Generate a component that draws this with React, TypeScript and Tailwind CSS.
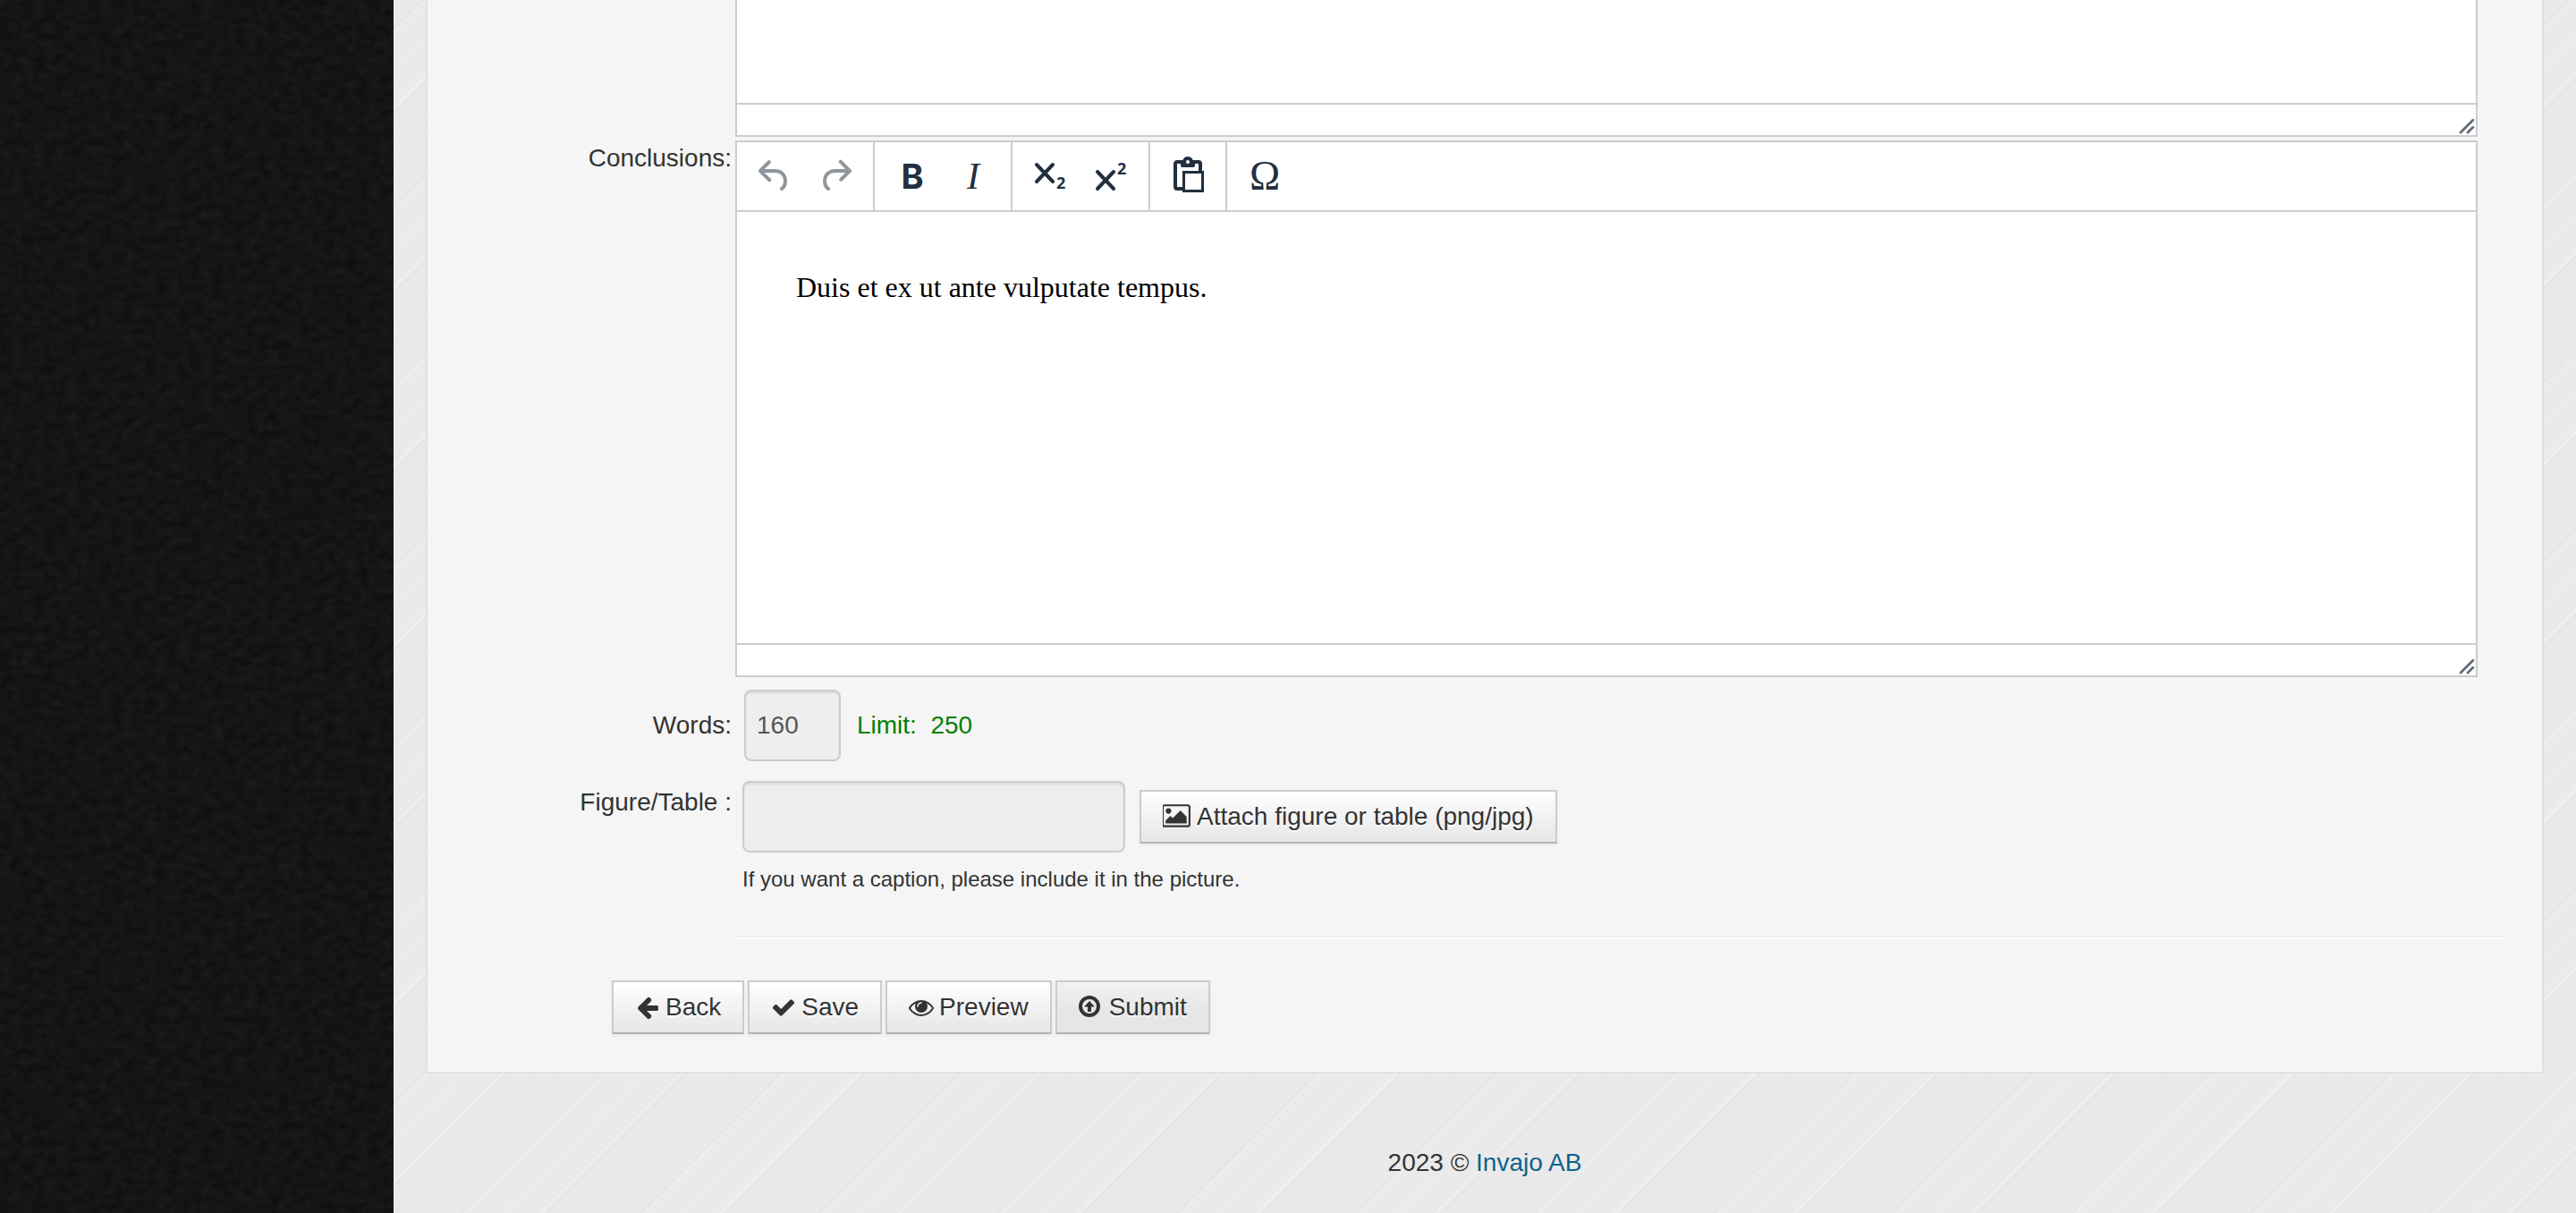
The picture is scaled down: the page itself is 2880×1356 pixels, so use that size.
import { useState, type ReactNode } from 'react';

const icons = {
  undo: 'M6.4 8H12c3.7 0 6.2 2 6.8 5.1.6 2.7-.4 5.6-2.3 6.8a1 1 0 01-1-1.8c1.1-.6 1.8-2.7 1.4-4.6-.5-2.1-2.1-3.5-4.9-3.5H6.4l3.3 3.3a1 1 0 11-1.4 1.4l-5-5a1 1 0 010-1.4l5-5a1 1 0 011.4 1.4L6.4 8z',
  redo: 'M17.6 10H12c-2.8 0-4.4 1.4-4.9 3.5-.4 2 .3 4 1.4 4.6a1 1 0 11-1 1.8c-2-1.2-2.9-4.1-2.3-6.8.6-3 3-5.1 6.8-5.1h5.6l-3.3-3.3a1 1 0 111.4-1.4l5 5a1 1 0 010 1.4l-5 5a1 1 0 01-1.4-1.4l3.3-3.3z',
  paste:
    'M18 9V5h-2v1c0 .6-.4 1-1 1H9a1 1 0 01-1-1V5H6v13h3V9h9zM9 20H6a2 2 0 01-2-2V5c0-1.1.9-2 2-2h3.2A3 3 0 0112 1a3 3 0 012.8 2H18a2 2 0 012 2v4h1v12H9v-1zm1.5-9.5v9h9v-9h-9zM12 3a1 1 0 00-1 1c0 .5.4 1 1 1s1-.5 1-1-.4-1-1-1z',
  arrowLeft:
    'M1664 896v128q0 53-32.5 90.5t-84.5 37.5h-704l293 294q38 36 38 90t-38 90l-75 76q-37 37-90 37-52 0-91-37l-651-652q-37-37-37-90 0-52 37-91l651-650q38-38 91-38 52 0 90 38l75 74q38 38 38 91t-38 91l-293 293h704q52 0 84.5 37.5t32.5 90.5z',
  check:
    'M1671 566q0 40-28 68l-724 724-136 136q-28 28-68 28t-68-28l-136-136-362-362q-28-28-28-68t28-68l136-136q28-28 68-28t68 28l294 295 656-657q28-28 68-28t68 28l136 136q28 28 28 68z',
  eye: 'M1664 960q-152-236-381-353 61 104 61 225 0 185-131.5 316.5t-316.5 131.5-316.5-131.5-131.5-316.5q0-121 61-225-229 117-381 353 133 205 333.5 326.5t434.5 121.5 434.5-121.5 333.5-326.5zm-720-384q0-20-14-34t-34-14q-125 0-214.5 89.5t-89.5 214.5q0 20 14 34t34 14 34-14 14-34q0-86 61-147t147-61q20 0 34-14t14-34zm848 384q0 34-20 69-140 230-376.5 368.5t-499.5 138.5-499.5-139-376.5-368q-20-35-20-69t20-69q140-229 376.5-368t499.5-139 499.5 139 376.5 368q20 35 20 69z',
  picture:
    'M576 576q0 80-56 136t-136 56-136-56-56-136 56-136 136-56 136 56 56 136zm1024 384v448h-1408v-192l320-320 160 160 512-512zm96-704h-1600q-13 0-22.5 9.5t-9.5 22.5v1216q0 13 9.5 22.5t22.5 9.5h1600q13 0 22.5-9.5t9.5-22.5v-1216q0-13-9.5-22.5t-22.5-9.5zm160 32v1216q0 66-47 113t-113 47h-1600q-66 0-113-47t-47-113v-1216q0-66 47-113t113-47h1600q66 0 113 47t47 113z',
};

function ToolIcon({ d }: { d: string }) {
  return (
    <svg viewBox="0 0 24 24" className="size-12 fill-current">
      <path d={d} />
    </svg>
  );
}

function ButtonIcon({ d }: { d: string }) {
  return (
    <svg viewBox="0 0 1792 1792" className="size-7 fill-current">
      <path d={d} />
    </svg>
  );
}

function ToolGroup({ children, last = false }: { children: ReactNode; last?: boolean }) {
  return <div className={`flex px-2 ${last ? '' : 'border-r-2 border-[#ccc]'}`}>{children}</div>;
}

function Tool({ label, disabled, children }: { label: string; disabled?: boolean; children: ReactNode }) {
  return (
    <button
      type="button"
      aria-label={label}
      disabled={disabled}
      className="flex h-[76px] w-[68px] items-center justify-center text-[#222f3e] disabled:opacity-50"
    >
      {children}
    </button>
  );
}

function StatusBar() {
  return (
    <div className="flex h-9 items-end justify-end border-t-2 border-[#ccc]">
      <svg viewBox="0 0 10 10" className="size-5 fill-[#222f3e]/70">
        <path d="M8.1 1.1A.5.5 0 119 2l-7 7A.5.5 0 111 8l7-7zM8.1 5.1A.5.5 0 119 6l-3 3A.5.5 0 115 8l3-3z" />
      </svg>
    </div>
  );
}

function Toolbar() {
  return (
    <div className="flex border-b-2 border-[#ccc]">
      <ToolGroup>
        <Tool label="Undo" disabled>
          <ToolIcon d={icons.undo} />
        </Tool>
        <Tool label="Redo" disabled>
          <ToolIcon d={icons.redo} />
        </Tool>
      </ToolGroup>
      <ToolGroup>
        <Tool label="Bold">
          <span className="font-[Inter,sans-serif] text-[38px] leading-10 font-bold">B</span>
        </Tool>
        <Tool label="Italic">
          <span className="font-['Liberation_Serif',serif] text-[42px] leading-10 italic">I</span>
        </Tool>
      </ToolGroup>
      <ToolGroup>
        <Tool label="Subscript">
          <svg viewBox="0 0 48 48" className="size-12 fill-current">
            <path d="M9 11l18 19M27 11L9 30" stroke="currentColor" strokeWidth="4" strokeLinecap="round" />
            <text x="31" y="38" fontSize="18" fontWeight="700" fontFamily="Open Sans, sans-serif">2</text>
          </svg>
        </Tool>
        <Tool label="Superscript">
          <svg viewBox="0 0 48 48" className="size-12 fill-current">
            <path d="M9 19l18 19M27 19L9 38" stroke="currentColor" strokeWidth="4" strokeLinecap="round" />
            <text x="31" y="22" fontSize="18" fontWeight="700" fontFamily="Open Sans, sans-serif">2</text>
          </svg>
        </Tool>
      </ToolGroup>
      <ToolGroup>
        <Tool label="Paste as text">
          <ToolIcon d={icons.paste} />
        </Tool>
      </ToolGroup>
      <ToolGroup last>
        <Tool label="Special character">
          <span className="font-['Liberation_Serif',serif] text-[46px] leading-10">Ω</span>
        </Tool>
      </ToolGroup>
    </div>
  );
}

function FormButton({ icon, active, children }: { icon: ReactNode; active?: boolean; children: ReactNode }) {
  return (
    <button
      type="button"
      className={`flex h-[60px] items-center gap-[6px] border-2 border-[#ccc] border-b-[#b3b3b3] bg-linear-to-b px-6 whitespace-nowrap shadow-[0_2px_4px_rgba(0,0,0,0.05)] text-shadow-[0_2px_2px_rgba(255,255,255,0.75)] ${
        active ? 'from-[#f2f2f2] to-[#e6e6e6] to-60%' : 'from-white to-[#e6e6e6]'
      }`}
    >
      {icon}
      <span>{children}</span>
    </button>
  );
}

const labelClass = 'w-[344px] shrink-0 pr-1 text-right';
const inputClass = 'h-20 rounded-lg border-2 border-[#ccc] bg-[#eee] px-3 text-[#555] shadow-[inset_0_2px_2px_rgba(0,0,0,0.075)]';

export default function App() {
  const [conclusions, setConclusions] = useState('Duis et ex ut ante vulputate tempus.');
  const [methods, setMethods] = useState('');

  return (
    <div className="flex min-h-screen bg-[#eaeaea] font-['Liberation_Sans',Arial,sans-serif] text-[28px] leading-10 text-[#333]">
      {/* Sidebar */}
      <aside className="relative w-[440px] shrink-0 bg-[#151515]">
        <svg className="absolute inset-0 size-full" aria-hidden="true">
          <filter id="grain" x="0" y="0" width="100%" height="100%" colorInterpolationFilters="sRGB">
            <feTurbulence type="fractalNoise" baseFrequency="0.08 0.11" numOctaves="3" seed="4" />
            <feColorMatrix values="0.07 0 0 0 0.046  0.07 0 0 0 0.046  0.07 0 0 0 0.046  0 0 0 0 1" />
          </filter>
          <rect width="100%" height="100%" filter="url(#grain)" />
        </svg>
      </aside>

      <main className="relative min-w-0 flex-1 px-9 pb-9">
        {/* Diagonal brushed background */}
        <svg className="absolute inset-0 size-full" aria-hidden="true">
          <pattern id="brushed" width="200" height="200" patternUnits="userSpaceOnUse">
            <g fill="none" strokeWidth="3">
              <path d="M-10 137L137 -10M117 210L210 117" stroke="#e7e7e7" />
              <path d="M-10 132L132 -10M112 210L210 112" stroke="#efefef" />
              <path d="M-10 42L42 -10M22 210L210 22" stroke="#e7e7e7" />
              <path d="M-10 47L47 -10M27 210L210 27" stroke="#ededed" />
              <path d="M-10 195L195 -10M175 210L210 175" stroke="#e8e8e8" />
              <path d="M-10 90L90 -10M70 210L210 70" stroke="#ebebeb" />
              <path d="M-10 170L170 -10M150 210L210 150" stroke="#e8e8e8" />
            </g>
          </pattern>
          <rect width="100%" height="100%" fill="url(#brushed)" />
        </svg>

        <form className="relative border-2 border-t-0 border-[#e1e1e1] bg-[#f5f5f5] pr-11 pb-[42px]">
          <div className="mb-1 flex">
            <div className={labelClass} />
            <div className="mr-7 flex-1 border-2 border-t-0 border-[#ccc] bg-white">
              <textarea
                aria-label="Methods"
                value={methods}
                onChange={(e) => setMethods(e.target.value)}
                className="block h-[115px] w-full resize-none px-[66px] outline-none"
              />
              <StatusBar />
            </div>
          </div>

          <div className="flex">
            <label htmlFor="conclusions" className={labelClass}>
              Conclusions:
            </label>
            <div className="mr-7 flex-1 border-2 border-[#ccc] bg-white">
              <Toolbar />
              <textarea
                id="conclusions"
                value={conclusions}
                onChange={(e) => setConclusions(e.target.value)}
                className="block h-[482px] w-full resize-none px-[66px] pt-16 font-['Liberation_Serif',serif] text-[32px] leading-10 text-black outline-none"
              />
              <StatusBar />
            </div>
          </div>

          <div className="mt-[14px] flex items-center">
            <label htmlFor="words" className={labelClass}>
              Words:
            </label>
            <input id="words" readOnly value="160" className={`ml-[10px] w-[108px] ${inputClass}`} />
            <span className="ml-[18px] text-[#008000]">Limit:&nbsp; 250</span>
          </div>

          <div className="mt-[22px] flex">
            <label htmlFor="figure" className={`pt-1 ${labelClass}`}>
              Figure/Table :
            </label>
            <div className="ml-2">
              <div className="flex items-center gap-4">
                <input id="figure" readOnly className={`w-[428px] ${inputClass}`} />
                <FormButton
                  icon={
                    <svg viewBox="0 0 1920 1920" className="size-8 fill-current">
                      <path d={icons.picture} />
                    </svg>
                  }
                >
                  Attach figure or table (png/jpg)
                </FormButton>
              </div>
              <p className="mt-3 text-2xl leading-9">If you want a caption, please include it in the picture.</p>
            </div>
          </div>

          <hr className="mt-[45px] ml-[344px] h-1 border-t-2 border-b-2 border-t-[#eee] border-b-white" />

          <div className="mt-[46px] ml-[206px] flex gap-1">
            <FormButton icon={<ButtonIcon d={icons.arrowLeft} />}>Back</FormButton>
            <FormButton icon={<ButtonIcon d={icons.check} />}>Save</FormButton>
            <FormButton icon={<ButtonIcon d={icons.eye} />}>Preview</FormButton>
            <FormButton
              active
              icon={
                <svg viewBox="0 0 28 28" className="size-7 fill-current">
                  <circle cx="12" cy="13" r="10" fill="none" stroke="currentColor" strokeWidth="4" />
                  <path d="M12 7l6 6.500h-4v5.500h-4v-5.500H6z" />
                </svg>
              }
            >
              Submit
            </FormButton>
          </div>
        </form>

        <footer className="relative mt-20 text-center">
          2023 © <a href="#" className="text-[#0d638f]">Invajo AB</a>
        </footer>
      </main>
    </div>
  );
}
